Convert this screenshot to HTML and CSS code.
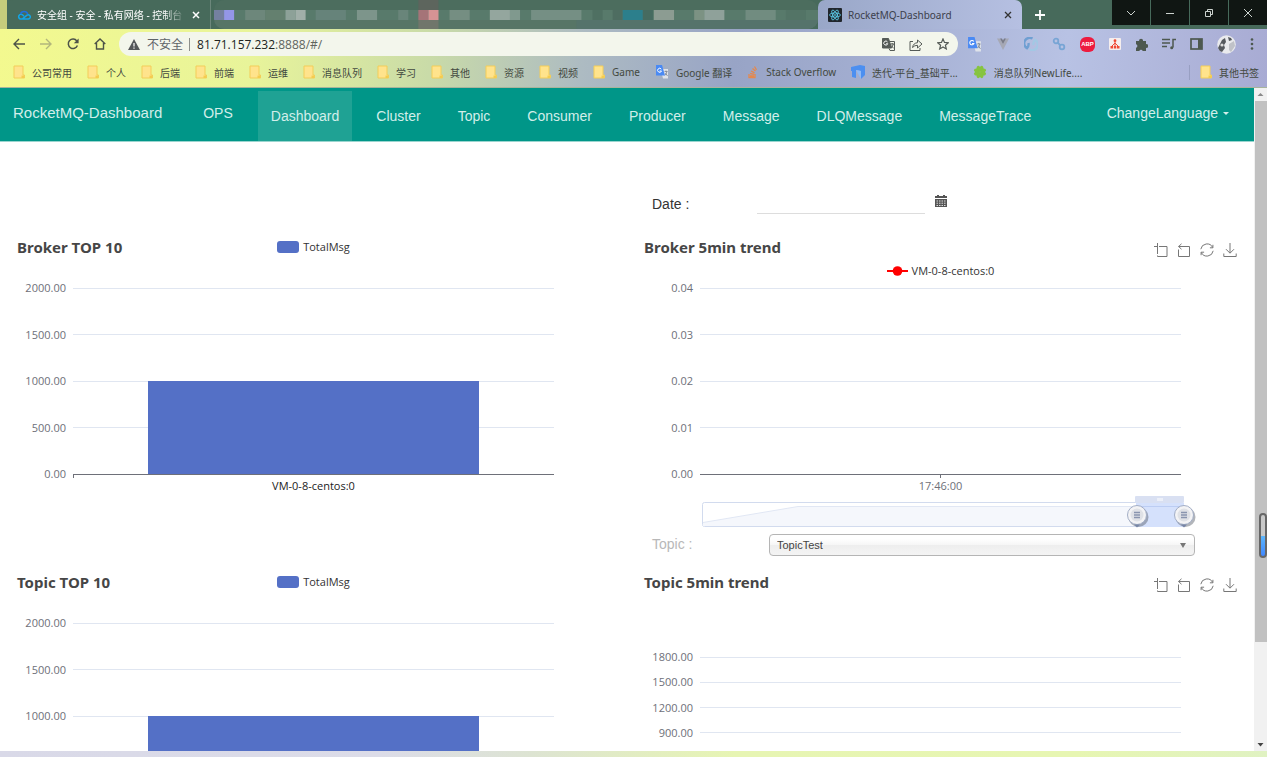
FILE: index.html
```html
<!DOCTYPE html>
<html lang="zh-CN">
<head>
<meta charset="utf-8">
<title>RocketMQ-Dashboard</title>
<link rel="stylesheet" href="styles.css">
</head>
<body>
<svg class="defs" width="0" height="0" aria-hidden="true">
  <symbol id="folder" viewBox="0 0 12 14"><path d="M1 1h9v9h1.500v3H1z" fill="#ffe38c" stroke="#f3cd58"/><path d="M8.500 10.500h2.500v2.500H8.500z" fill="#f5cc4e"/></symbol>
  <symbol id="translate" viewBox="0 0 14 14"><path d="M5.500 4H13v9.500H8z" fill="#dfe3ea"/><path d="M1 0h6l3 10.500H1z" fill="#4a8af4"/><path d="M6.300 4.200A2 2 0 1 0 6.500 6H4.700" fill="none" stroke="#fff"/><path d="M9.500 6.500H12.500M11 5.500v1M12 6.500q-.8 2.500-2 3.800M10.500 8l2 3" fill="none" stroke="#78828e" stroke-width=".8"/></symbol>
  <symbol id="zoom" viewBox="0 0 14 14"><path d="M0 3.500h3M3.500 0v11M3.500 12.500V13.500H13V3.500H5" fill="none" stroke="#777"/></symbol>
  <symbol id="back" viewBox="0 0 14 14"><path d="M1.500 6.500v7h11V3.500H1.500M4.500.8L1.600 3.500l2.900 2.700" fill="none" stroke="#777"/></symbol>
  <symbol id="restore" viewBox="0 0 14 14"><path d="M.8 6.200A6.300 6.300 0 0 1 12.700 4.500M13.200 7.800A6.300 6.300 0 0 1 1.300 9.500M12.900 1.800v3h-3M1.100 12.200v-3h3" fill="none" stroke="#777"/></symbol>
  <symbol id="save" viewBox="0 0 14 14"><path d="M7 0v10M3 6.200l4 4 4-4M.8 10.500v3h12.400v-3" fill="none" stroke="#777"/></symbol>
</svg>

<header class="titlebar">
  <div class="tab tab-cloud">
    <svg width="14" height="10" viewBox="0 0 14 10" fill="none" stroke-width="1.500"><path d="M5.500 8.800L10 5.200A2.100 2.100 0 1 1 11 9H3.300A2.400 2.400 0 1 1 5.500 4.800l1.500 1.400" stroke="#12a5e8"/><path d="M3.500 4a3.700 3.400 0 0 1 7.200 0" stroke="#1f6fe0"/></svg>
    <span class="tab-text fade">安全组 - 安全 - 私有网络 - 控制台</span>
    <button class="x" aria-label="关闭"><svg width="8" height="8" viewBox="0 0 8 8"><path d="M1 1l6 6M7 1L1 7" stroke="#fff" stroke-width="1.500"/></svg></button>
  </div>
  <div class="tab-blurred">
    <svg width="600" height="29" viewBox="0 0 600 29" preserveAspectRatio="none">
      <rect width="600" height="29" fill="#4c6d5e"/><rect y="20" width="600" height="9" fill="#577566"/><rect x="360" y="20" width="240" height="9" fill="#55736b"/>
      <rect x="0" y="10" width="600" height="10" fill="#587a6b"/>
      <rect x="10" y="10" width="10" height="10" fill="#9496e8"/><rect x="0" y="10" width="10" height="10" fill="#74809f"/>
      <rect x="31" y="10" width="20" height="10" fill="#6d877b"/><rect x="51" y="10" width="20" height="10" fill="#64806f"/><rect x="71" y="10" width="10" height="10" fill="#8da198"/><rect x="81" y="10" width="10" height="10" fill="#a1afa9"/><rect x="101" y="10" width="30" height="10" fill="#66837a"/><rect x="142" y="10" width="20" height="10" fill="#7d958b"/><rect x="183" y="10" width="10" height="10" fill="#69857a"/>
      <rect x="203" y="10" width="10" height="10" fill="#a57478"/><rect x="213" y="10" width="10" height="10" fill="#d69394"/><rect x="203" y="0" width="20" height="10" fill="#5d655d"/><rect x="203" y="20" width="20" height="9" fill="#70766b"/>
      <rect x="234" y="10" width="20" height="10" fill="#758e82"/><rect x="274" y="10" width="20" height="10" fill="#94a69e"/><rect x="294" y="10" width="10" height="10" fill="#80998e"/><rect x="315" y="10" width="50" height="10" fill="#758f84"/><rect x="376" y="10" width="10" height="10" fill="#4f7062"/><rect x="396" y="10" width="10" height="10" fill="#4e6d61"/>
      <rect x="406" y="10" width="20" height="10" fill="#2c7f8c"/><rect x="426" y="10" width="10" height="10" fill="#466b60"/><rect x="437" y="10" width="20" height="10" fill="#8c9c92"/><rect x="477" y="10" width="10" height="10" fill="#7c9283"/><rect x="487" y="10" width="20" height="10" fill="#8fa19a"/><rect x="528" y="10" width="30" height="10" fill="#718c80"/><rect x="568" y="10" width="20" height="10" fill="#537466"/>
    </svg>
  </div>
  <div class="tab tab-active">
    <svg width="14" height="14" viewBox="0 0 14 14" fill="none" stroke="#5fd3f3" stroke-width=".8"><rect width="14" height="14" rx="1" fill="#20262c" stroke="none"/><ellipse cx="7" cy="7" rx="5.500" ry="2.100"/><ellipse cx="7" cy="7" rx="5.500" ry="2.100" transform="rotate(60 7 7)"/><ellipse cx="7" cy="7" rx="5.500" ry="2.100" transform="rotate(120 7 7)"/><circle cx="7" cy="7" r=".6"/></svg>
    <span class="tab-text">RocketMQ-Dashboard</span>
    <button class="x" aria-label="关闭"><svg width="8" height="8" viewBox="0 0 8 8"><path d="M1 1l6 6M7 1L1 7" stroke="#333" stroke-width="1.300"/></svg></button>
  </div>
  <button class="newtab" aria-label="新标签页"><svg width="12" height="12" viewBox="0 0 12 12"><path d="M6 1v10M1 6h10" stroke="#fff" stroke-width="1.800"/></svg></button>
  <div class="winbtns">
    <button aria-label="搜索标签页"><svg width="10" height="10" viewBox="0 0 10 10"><path d="M1 3l4 4 4-4"/></svg></button>
    <button aria-label="最小化"><svg width="10" height="10" viewBox="0 0 10 10"><path d="M1 5.500h8"/></svg></button>
    <button aria-label="还原"><svg width="10" height="10" viewBox="0 0 10 10"><path d="M1.500 3.500h5v5h-5zM3.500 3.500v-2h5v5h-2"/></svg></button>
    <button aria-label="关闭窗口"><svg width="10" height="10" viewBox="0 0 10 10"><path d="M1 1l8 8M9 1L1 9"/></svg></button>
  </div>
</header>

<div class="chrome">
  <div class="toolbar">
    <div class="navbtns">
      <button aria-label="后退"><svg width="12" height="12" viewBox="0 0 12 12"><path d="M12 6H1M6 1L1 6l5 5" fill="none" stroke="#4d5348" stroke-width="1.400"/></svg></button>
      <button aria-label="前进"><svg width="12" height="12" viewBox="0 0 12 12"><path d="M0 6h11M6 1l5 5-5 5" fill="none" stroke="#b2b77c" stroke-width="1.400"/></svg></button>
      <button aria-label="重新加载"><svg width="12" height="12" viewBox="0 0 12 12"><path d="M10.400 7.500A4.700 4.700 0 1 1 9.800 3" fill="none" stroke="#4d5348" stroke-width="1.500"/><path d="M11.600.5v4.800H6.800z" fill="#4d5348"/></svg></button>
      <button aria-label="主页"><svg width="12" height="12" viewBox="0 0 12 12"><path d="M.7 6L6 1l5.300 5M2.500 5v6h7V5" fill="none" stroke="#4d5348" stroke-width="1.400"/></svg></button>
    </div>
    <div class="address">
      <svg width="12" height="11" viewBox="0 0 12 11"><path d="M6 0l6 11H0z" fill="#55585a"/><path d="M6 4v3.500M6 8.500v1.200" stroke="#fff" stroke-width="1.200"/></svg>
      <span class="insecure">不安全</span>
      <span class="url"><b>81.71.157.232</b>:8888/#/</span>
      <span class="addr-icons">
        <svg width="13" height="13" viewBox="0 0 13 13" fill="none" stroke="#555b57"><path d="M.5.500h6l3 9.500h-9z" fill="#555b57"/><path d="M8 3.500h4.500v9H8l-1-2M8.500 6h3.500M10.200 5v1M11.300 6q-.6 2.500-2 3.500M9.300 7.500l2.200 2.800"/><path d="M5.500 4a2 2 0 1 0 .2 1.700H4.200" stroke="#fff"/></svg>
        <svg width="14" height="13" viewBox="0 0 14 13" fill="none" stroke="#555b57"><path d="M4 3.500H1v9h10V10M3.500 9.500q.8-4.500 5-4.800V2l4.500 4-4.500 4V7.300Q5.500 7.200 3.500 9.500z"/></svg>
        <svg width="12" height="12" viewBox="0 0 12 12" fill="none" stroke="#555b57" stroke-width="1.200"><path d="M6 .9l1.500 3.500 3.800.3-2.900 2.500.9 3.700L6 8.900l-3.300 2 .9-3.700L.7 4.700l3.800-.3z"/></svg>
      </span>
    </div>
    <div class="exts">
      <svg width="15" height="15"><use href="#translate"/></svg>
      <svg width="14" height="14" viewBox="0 0 14 14"><path d="M1 1.500h3L7 7l3-5.500h3L7 13z" fill="#a6a8b4"/><path d="M4 1.500h2L7 3.500l1-2h2L7 7z" fill="#797b86"/></svg>
      <svg width="14" height="14" viewBox="0 0 14 14" fill="none" stroke-width="2.400"><path d="M8.500 1.500A5.400 5.400 0 0 0 3 11.200Q5 9 4.500 6" stroke="#6f9fd2"/><path d="M5.500 12.500A5.400 5.400 0 0 0 11 2.800Q9 5 9.500 8" stroke="#a3c8e4"/></svg>
      <svg width="14" height="14" viewBox="0 0 14 14" fill="none" stroke="#78a5d5" stroke-width="1.800"><circle cx="4" cy="4" r="2.300"/><circle cx="10" cy="10" r="2.300"/><path d="M5.500 5.500l3 3"/></svg>
      <span class="abp">ABP</span>
      <svg width="12" height="12" viewBox="0 0 12 12"><rect width="12" height="12" rx="1" fill="#f5eeee"/><circle cx="6" cy="2.700" r="1.400" fill="#f04a35"/><path d="M6 3.500v5M6 5L3 8M6 5l3 3" fill="none" stroke="#f04a35"/><path d="M1.500 8h2.500v2.500H1.500zM4.800 8h2.500v2.500H4.800zM8 8h2.500v2.500H8z" fill="#f04a35"/></svg>
      <svg width="13" height="13" viewBox="0 0 13 13"><path d="M1 3h3.200a1.900 1.900 0 1 1 3.700 0H11v3.200a1.900 1.900 0 1 1 0 3.600V13H7.700a1.800 1.800 0 0 0-3.400 0H1V9.700a1.800 1.800 0 0 0 0-3.500z" fill="#4d584f"/></svg>
      <svg width="14" height="12" viewBox="0 0 14 12" fill="none" stroke="#4d584f" stroke-width="1.500"><path d="M0 1.500h8M0 5h8M0 8.500h5M11 9.500V1.500h3"/><circle cx="9.700" cy="9.700" r="1.500" fill="#4d584f" stroke="none"/></svg>
      <svg width="13" height="12" viewBox="0 0 13 12"><rect x="1" y="1" width="11" height="10" fill="none" stroke="#4d584f" stroke-width="1.700"/><path d="M8 1h4v10H8z" fill="#4d584f"/></svg>
      <svg width="19" height="19" viewBox="0 0 19 19"><circle cx="9.500" cy="9.500" r="9.300" fill="#e9eaed"/><path d="M1 13L5 5l3-2 1 4-2 3 1 3-3 4Q2 16 1 13zM11 2l3 1 1 2-3 1z" fill="#55595e"/><path d="M12 9l5-3 1 5-4 6-2-2z" fill="#c0c2c8"/><circle cx="5" cy="10" r="1.600" fill="#ddd"/></svg>
      <svg width="4" height="14" viewBox="0 0 4 14" fill="#4d584f"><circle cx="2" cy="2.500" r="1.300"/><circle cx="2" cy="7" r="1.300"/><circle cx="2" cy="11.500" r="1.300"/></svg>
    </div>
  </div>
  <nav class="bookmarks" aria-label="书签">
    <a href="#"><svg width="12" height="14"><use href="#folder"/></svg>公司常用</a>
    <a href="#"><svg width="12" height="14"><use href="#folder"/></svg>个人</a>
    <a href="#"><svg width="12" height="14"><use href="#folder"/></svg>后端</a>
    <a href="#"><svg width="12" height="14"><use href="#folder"/></svg>前端</a>
    <a href="#"><svg width="12" height="14"><use href="#folder"/></svg>运维</a>
    <a href="#"><svg width="12" height="14"><use href="#folder"/></svg>消息队列</a>
    <a href="#"><svg width="12" height="14"><use href="#folder"/></svg>学习</a>
    <a href="#"><svg width="12" height="14"><use href="#folder"/></svg>其他</a>
    <a href="#"><svg width="12" height="14"><use href="#folder"/></svg>资源</a>
    <a href="#"><svg width="12" height="14"><use href="#folder"/></svg>视频</a>
    <a href="#"><svg width="12" height="14"><use href="#folder"/></svg>Game</a>
    <a href="#"><svg width="14" height="14"><use href="#translate"/></svg>Google 翻译</a>
    <a href="#"><svg width="12" height="14" viewBox="0 0 12 14" fill="none" stroke="#e5884c" stroke-width="1.300"><path d="M2 9v3.500h6V9M3 11h4M3.200 8.500l4 .8M4 6l3.500 1.800M5.500 3.500l3 2.600M7.500 1.500l2 3.300"/></svg>Stack Overflow</a>
    <a href="#"><svg width="14" height="14" viewBox="0 0 14 14"><path d="M0 2l9-2 5 1v9l-4 4V6L5 5v8L1 12V6H0z" fill="#4c8ff0"/><path d="M5 5l5 1v8z" fill="#8fbaf7"/></svg>迭代-平台_基础平...</a>
    <a href="#"><svg width="14" height="14" viewBox="0 0 14 14" fill="#86c440"><g id="leaf"><path d="M7 7Q2 5 4 1.500 5.500 0 7 2 8.500 0 10 1.500 12 5 7 7z"/></g><use href="#leaf" transform="rotate(90 7 7)"/><use href="#leaf" transform="rotate(180 7 7)"/><use href="#leaf" transform="rotate(270 7 7)"/></svg>消息队列NewLife....</a>
    <a href="#" class="other"><svg width="12" height="14"><use href="#folder"/></svg>其他书签</a>
  </nav>
</div>

<div class="viewport">
  <div class="page">
    <nav class="appnav">
      <a class="brand" href="#">RocketMQ-Dashboard</a>
      <a class="ops" href="#">OPS</a>
      <a class="item active" href="#">Dashboard</a>
      <a class="item" href="#">Cluster</a>
      <a class="item" href="#">Topic</a>
      <a class="item" href="#">Consumer</a>
      <a class="item" href="#">Producer</a>
      <a class="item" href="#">Message</a>
      <a class="item" href="#">DLQMessage</a>
      <a class="item" href="#">MessageTrace</a>
      <button class="lang">ChangeLanguage <span class="caret"></span></button>
    </nav>

    <main class="board">
      <div class="date-row right">
        <label for="date">Date :</label>
        <input id="date" type="text">
        <svg width="12" height="13" viewBox="0 0 12 13"><path d="M0 1h2V0h2v1h4V0h2v1h2v2H0z" fill="#555"/><path d="M0 4h12v8H0z" fill="#555"/><path d="M1.500 6h9M1.500 8.200h9M1.500 10.500h9" stroke="#ddd" stroke-dasharray="1.500 1"/></svg>
      </div>

      <section class="chart left">
        <div class="chart-head"><h2>Broker TOP 10</h2><span class="legend"><i class="swatch"></i>TotalMsg</span></div>
        <div class="legend-line"></div>
        <div class="plot">
          <div class="tick"><span>2000.00</span></div><div class="tick"><span>1500.00</span></div><div class="tick"><span>1000.00</span></div><div class="tick"><span>500.00</span></div><div class="tick axis"><span>0.00</span></div>
          <div class="bars"><div class="bar"></div></div>
        </div>
        <div class="xlabel dark">VM-0-8-centos:0</div>
      </section>

      <section class="chart right">
        <div class="chart-head"><h2>Broker 5min trend</h2>
          <span class="tools"><button aria-label="Zoom"><svg width="14" height="14"><use href="#zoom"/></svg></button><button aria-label="Zoom reset"><svg width="14" height="14"><use href="#back"/></svg></button><button aria-label="Restore"><svg width="14" height="14"><use href="#restore"/></svg></button><button aria-label="Save"><svg width="14" height="14"><use href="#save"/></svg></button></span></div>
        <div class="legend-line"><span class="legend"><svg width="21" height="10" viewBox="0 0 21 10"><path d="M0 5h21" stroke="red" stroke-width="2"/><circle cx="10.500" cy="5" r="4.800" fill="red"/></svg>VM-0-8-centos:0</span></div>
        <div class="plot">
          <div class="tick"><span>0.04</span></div><div class="tick"><span>0.03</span></div><div class="tick"><span>0.02</span></div><div class="tick"><span>0.01</span></div><div class="tick axis mid"><span>0.00</span></div>
        </div>
        <div class="xlabel">17:46:00</div>
        <svg class="range" viewBox="0 0 500 34">
          <rect x="2.500" y="6.500" width="481" height="24" rx="2" fill="#fff" stroke="#d2dbee"/>
          <path d="M3 26.500L98 10.500H483V30H3z" fill="#f5f7fc"/><path d="M3 26.500L98 10.500H483" fill="none" stroke="#e1e7f4"/>
          <rect x="436" y="7" width="48" height="24" fill="#d5e1fc"/><path d="M436 10.500h48" stroke="#bccdf3"/>
          <rect x="435" y="0" width="49" height="7" rx="1" fill="#d9e0f2"/><path d="M458 2v3M460 2v3M462 2v3" stroke="#fff"/>
          <g id="h1"><circle cx="438.500" cy="21" r="10" fill="#555a66" opacity=".45"/><circle cx="437" cy="19" r="9.500" fill="#f3f3f5" stroke="#a3aec6"/><circle cx="437" cy="19" r="6.500" fill="#dfe1e6"/><path d="M434 16.500h6M434 19h6M434 21.500h6" stroke="#8994ae" stroke-width="1.300"/><path d="M434 28.500l3 3 3-3z" fill="#7785a5"/></g>
          <use href="#h1" x="47"/>
        </svg>
      </section>

      <div class="topic-row right">
        <label for="topic">Topic :</label>
        <div class="select"><select id="topic"><option>TopicTest</option></select></div>
      </div>

      <section class="chart left">
        <div class="chart-head"><h2>Topic TOP 10</h2><span class="legend"><i class="swatch"></i>TotalMsg</span></div>
        <div class="legend-line"></div>
        <div class="plot">
          <div class="tick"><span>2000.00</span></div><div class="tick"><span>1500.00</span></div><div class="tick"><span>1000.00</span></div><div class="tick"><span></span></div><div class="tick axis"><span></span></div>
          <div class="bars"><div class="bar"></div></div>
        </div>
      </section>

      <section class="chart right">
        <div class="chart-head"><h2>Topic 5min trend</h2>
          <span class="tools"><button aria-label="Zoom"><svg width="14" height="14"><use href="#zoom"/></svg></button><button aria-label="Zoom reset"><svg width="14" height="14"><use href="#back"/></svg></button><button aria-label="Restore"><svg width="14" height="14"><use href="#restore"/></svg></button><button aria-label="Save"><svg width="14" height="14"><use href="#save"/></svg></button></span></div>
        <div class="legend-line tall"></div>
        <div class="plot short">
          <div class="tick"><span>1800.00</span></div><div class="tick"><span>1500.00</span></div><div class="tick"><span>1200.00</span></div><div class="tick"><span>900.00</span></div><div class="tick"><span></span></div><div class="tick"><span></span></div><div class="tick axis"><span></span></div>
        </div>
      </section>
    </main>
  </div>
  <div class="scrollbar">
    <svg width="13" height="13" viewBox="0 0 13 13"><path d="M3.500 8L6.500 5l3 3z" fill="#8a8a8a"/></svg>
    <div class="track"><div class="thumb"></div></div>
    <svg width="13" height="13" viewBox="0 0 13 13"><path d="M3.500 5l3 3.500 3-3.500z" fill="#444"/></svg>
    <div class="meter"></div>
  </div>
</div>
<div class="desktop-edge"></div>
</body>
</html>
```

FILE: styles.css
```css
* { box-sizing: border-box; }
body { margin: 0; height: 100vh; display: flex; flex-direction: column; overflow: hidden; background: #fff; font-family: "Open Sans", "Noto Sans CJK SC", sans-serif; font-size: 11px; color: #333; }
button { border: 0; padding: 0; background: none; font: inherit; color: inherit; display: flex; align-items: center; justify-content: center; }
a { color: inherit; text-decoration: none; white-space: nowrap; }
svg { display: block; flex: none; }
.defs { position: absolute; }

.titlebar { height: 29px; flex: none; display: flex; background: #476a5b; padding-left: 7px; box-shadow: inset 7px 0 0 #c6cc7c; font-family: "Noto Sans", "Noto Sans CJK SC", sans-serif; }
.tab { display: flex; align-items: center; }
.tab-text { white-space: nowrap; overflow: hidden; }
.tab-cloud { width: 204px; padding: 0 10px; gap: 6px; color: #fff; background: #476a5b; border-radius: 6px 0 0 0; border-right: 1px solid #6c877b; font-size: 10px; }
.tab-cloud .tab-text { flex: 1; }
.fade { mask-image: linear-gradient(90deg, #000 85%, transparent); }
.tab-blurred { flex: 1; min-width: 0; padding-left: 3px; overflow: hidden; }
.tab-blurred svg { width: 100%; border-radius: 10px; }
.tab-active { width: 204px; padding: 0 10px; gap: 6px; background: linear-gradient(90deg, #99a7c8, #b6c0e2); border-radius: 7px 7px 0 0; color: #3c404c; font-size: 10px; }
.tab-active .tab-text { flex: 1; }
.newtab { width: 36px; }
.winbtns { width: 155px; height: 25px; margin-left: 54px; display: flex; gap: 1px; }
.winbtns button { flex: 1; background: #101613; }
.winbtns svg { fill: none; stroke: #ccd3cf; }

.chrome { flex: none; height: 59px; border-bottom: 1px solid #a8b49c; background: linear-gradient(95deg, #f3f98f 0, #e8f49a 20%, #c9dba8 34%, #adbbc2 46%, #98a4c6 58%, #a4afd2 70%, #b8c2e4 84%, #a8abd3 100%); }
.toolbar { height: 30px; display: flex; align-items: center; }
.navbtns { display: flex; gap: 15px; padding: 0 13px; }
.address { flex: 1; height: 24px; border-radius: 12px; background: #f3f6ec; display: flex; align-items: center; padding: 0 9px; gap: 7px; }
.insecure { color: #5f6368; font-size: 12px; border-right: 1px solid #8c908c; line-height: 13px; padding-right: 6px; }
.url { font-size: 12px; color: #60655f; }
.url b { font-weight: 400; color: #202420; }
.addr-icons { margin-left: auto; display: flex; align-items: center; gap: 14px; }
.exts { display: flex; align-items: center; gap: 14px; padding: 0 13px 0 9px; }
.abp { width: 15px; height: 15px; border-radius: 6px; background: #ed1b3f; color: #fff; font: 700 6px/15px "Liberation Sans", sans-serif; text-align: center; }
.bookmarks { height: 26px; display: flex; align-items: center; gap: 15px; padding: 0 8px 0 13px; font-family: "Noto Sans", "Noto Sans CJK SC", sans-serif; font-size: 10px; color: #43493f; }
.bookmarks a { display: flex; align-items: center; gap: 7px; }
.bookmarks .other { margin-left: auto; border-left: 1px solid #989fc2; padding-left: 10px; }

.viewport { flex: 1; min-height: 0; display: flex; }
.page { flex: 1; min-width: 0; overflow: hidden; }
.appnav { height: 54px; background: #009688; border-bottom: 1px solid #9ad5cf; display: flex; padding: 0 25px 0 13px; font: 14px "Liberation Sans", Arial, sans-serif; color: #d2eeea; }
.brand { font-size: 15px; line-height: 50px; margin-right: 41px; }
.ops { line-height: 50px; margin-right: 25px; }
.item { margin: 3px 11px 0 0; padding: 0 13px; line-height: 50px; }
.active { background: #1fa294; }
.lang { margin-left: auto; height: 50px; gap: 5px; }
.caret { border: 3px solid transparent; border-top: 3px solid #d2eeea; border-bottom: 0; }

.board { display: grid; grid-template-columns: 1fr 1fr; align-items: start; }
.left { grid-column: 1; }
.right { grid-column: 2; }
.date-row { height: 93px; padding: 50px 0 0 25px; display: flex; align-items: flex-start; font: 14px/24px "Liberation Sans", Arial, sans-serif; }
.date-row label { width: 105px; }
.date-row input { width: 168px; height: 22px; border: 0; border-bottom: 1px solid #ddd; margin-right: 10px; }
.date-row svg { margin-top: 3px; }
.topic-row { height: 40px; padding: 2px 59px 0 25px; display: flex; font: 14px/24px "Liberation Sans", Arial, sans-serif; color: #b8b8b8; }
.topic-row label { width: 117px; }
.select { flex: 1; position: relative; height: 22px; margin-top: 2px; }
.select select { display: block; width: 100%; height: 22px; appearance: none; border: 1px solid #b5b5b5; border-radius: 4px; padding: 0 7px; font: 11px "Liberation Sans", Arial, sans-serif; color: #444; background: linear-gradient(#fff 20%, #f6f6f6 50%, #eee 52%, #f4f4f4); }
.select::after { content: ""; position: absolute; right: 9px; top: 9px; border: 3px solid transparent; border-top: 5px solid #777; border-bottom: 0; }

.chart-head { height: 24px; display: grid; grid-template-columns: 1fr auto 1fr; align-items: center; padding: 0 17px; }
h2 { margin: 0; font-family: "Noto Sans", sans-serif; font-size: 15px; line-height: 22px; font-weight: 700; color: #464646; white-space: nowrap; }
.legend { display: flex; align-items: center; gap: 4px; color: #333; line-height: 12px; }
.swatch { width: 22px; height: 12px; border-radius: 3px; background: #5470c6; }
.tools { grid-column: 3; justify-self: end; display: flex; gap: 9px; padding-top: 6px; }
.legend-line { height: 23px; display: flex; justify-content: center; align-items: center; }
.tall { height: 57px; }
.plot { position: relative; height: 198px; display: flex; flex-direction: column; justify-content: space-between; padding-right: 73px; }
.short { height: 164px; }
.tick { height: 12px; display: flex; align-items: center; gap: 7px; color: #6e7079; position: relative; line-height: 12px; }
.tick span { width: 66px; text-align: right; }
.tick::after { content: ""; flex: 1; height: 1px; background: #e0e6f1; }
.axis::after { background: #6e7079; }
.axis::before { content: ""; position: absolute; left: 73px; top: 6px; width: 1px; height: 4px; background: #6e7079; }
.mid::before { left: calc(50% + 36px); }
.bars { position: absolute; left: 73px; right: 73px; top: 6px; bottom: 6px; display: flex; align-items: flex-end; justify-content: center; }
.bar { width: 69%; height: 50%; background: #5470c6; }
.xlabel { line-height: 12px; text-align: center; color: #6e7079; }
.dark { color: #222; }
.range { display: block; width: calc(100% - 127px); margin: 4px 0 0 73px; }

.scrollbar { width: 13px; background: #f1f1f1; display: flex; flex-direction: column; position: relative; }
.track { flex: 1; }
.thumb { height: 85%; background: #c1c1c1; margin-left: 1px; }
.meter { position: absolute; right: 0; top: 425px; width: 8px; height: 45px; border: 2px solid #666; border-radius: 4px; background: linear-gradient(#c8c8c8 50%, #5cb6fb 51%, #3f87ff); }
.desktop-edge { flex: none; height: 6px; background: linear-gradient(90deg, #d9d9e8 0, #dcdce8 30%, #dde4d2 42%, #e7f5b3 58%, #e7f6b2 85%, #e0f2c2 100%); }
```
